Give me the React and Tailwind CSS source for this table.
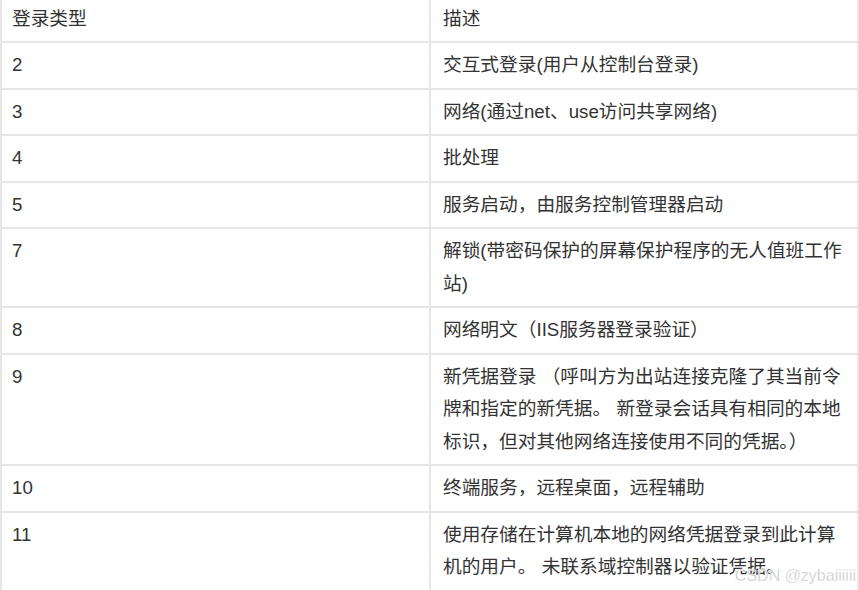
import React from 'react';

const rows = [
  { type: '2', desc: '交互式登录(用户从控制台登录)' },
  { type: '3', desc: '网络(通过net、use访问共享网络)' },
  { type: '4', desc: '批处理' },
  { type: '5', desc: '服务启动，由服务控制管理器启动' },
  { type: '7', desc: '解锁(带密码保护的屏幕保护程序的无人值班工作站)' },
  { type: '8', desc: '网络明文（IIS服务器登录验证）' },
  { type: '9', desc: '新凭据登录 （呼叫方为出站连接克隆了其当前令牌和指定的新凭据。 新登录会话具有相同的本地标识，但对其他网络连接使用不同的凭据。）' },
  { type: '10', desc: '终端服务，远程桌面，远程辅助' },
  { type: '11', desc: '使用存储在计算机本地的网络凭据登录到此计算机的用户。 未联系域控制器以验证凭据。' },
];

const App = () => {
  return (
    <div className="relative w-[859px] h-[590px] overflow-hidden bg-white">
      {/* login type table */}
      <table
        className="-mt-[5.5px] w-full table-fixed border-collapse text-[18.7px] leading-[32.5px] text-[#333]"
        style={{ fontFamily: '"Liberation Sans", "Noto Sans CJK SC", sans-serif' }}
      >
        <colgroup>
          <col className="w-[429px]" />
          <col />
        </colgroup>
        <thead>
          <tr>
            <th className="border-2 border-[#e6e6e6] px-[10px] py-[6px] text-left font-normal">登录类型</th>
            <th className="border-2 border-[#e6e6e6] px-[12px] py-[6px] text-left font-normal">描述</th>
          </tr>
        </thead>
        <tbody>
          {rows.map(row => (
            <tr key={row.type}>
              <td className="border-2 border-[#e6e6e6] px-[10px] py-[6px] align-top">{row.type}</td>
              <td className="border-2 border-[#e6e6e6] px-[12px] py-[6px] align-top">{row.desc}</td>
            </tr>
          ))}
        </tbody>
      </table>

      {/* watermark */}
      <span
        className="absolute right-[3px] bottom-[6px] text-[16px] leading-none text-[#c8c8c8]"
        style={{ fontFamily: '"Liberation Sans", sans-serif', WebkitTextStroke: '0.3px #ffffff' }}
      >
        CSDN @zybaiiiiii
      </span>
    </div>
  );
}

export default App;
